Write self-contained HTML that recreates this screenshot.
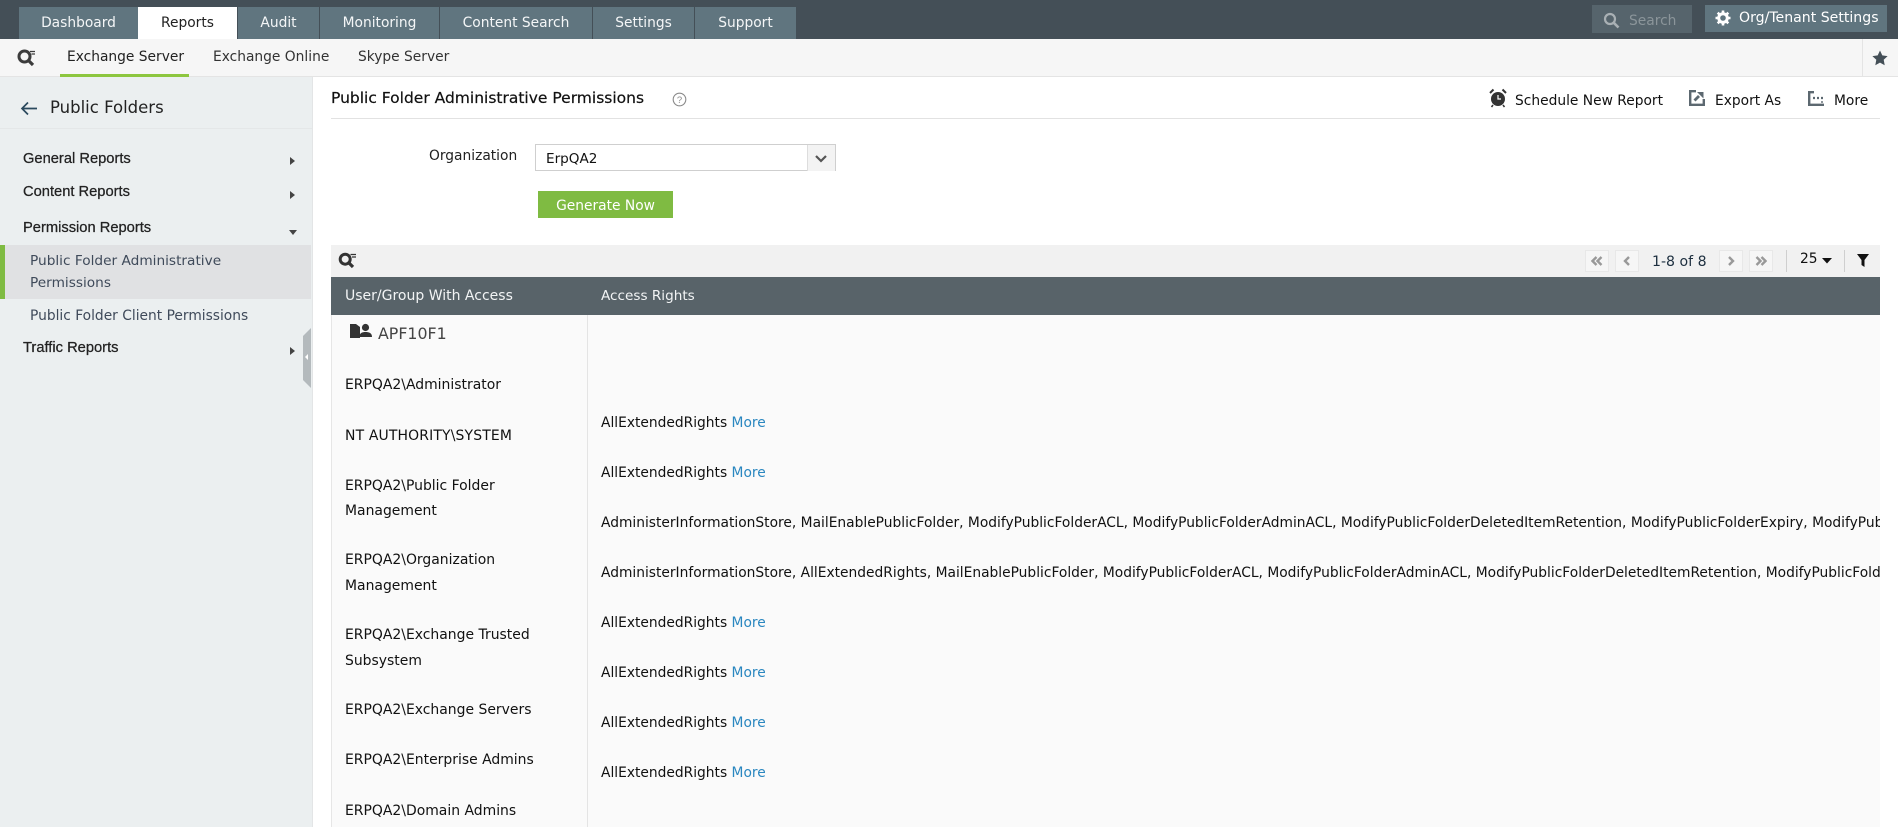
<!DOCTYPE html>
<html><head><meta charset="utf-8">
<style>
html,body{margin:0;padding:0;width:1898px;height:827px;overflow:hidden;background:#fff;font-family:"DejaVu Sans",sans-serif;color:#111}
div,span.a,svg{position:absolute}
.t{white-space:nowrap;font-size:13.8px;line-height:20px}
.tab{top:7px;height:32px;background:#60757f;color:#f4f6f7;font-size:13.8px;line-height:33px;text-align:center;white-space:nowrap}
.sh{font-family:"Liberation Sans",sans-serif;font-size:14.7px;font-weight:400;-webkit-text-stroke:.25px #222;color:#222;left:23px;line-height:20px;white-space:nowrap}
.pg{top:250px;width:22px;height:20px;border:1px solid #e8e8e8;background:#f6f6f6}
.m{color:#2a87c0}
.l{font-size:13.95px}
</style></head><body>
<div style="left:0;top:0;width:1898px;height:39px;background:#444f57"></div>
<div class="tab" style="left:19px;width:119px">Dashboard</div>
<div class="tab" style="left:138px;width:99px;background:#fff;color:#222">Reports</div>
<div class="tab" style="left:238px;width:81px">Audit</div>
<div class="tab" style="left:320px;width:119px">Monitoring</div>
<div class="tab" style="left:440px;width:152px">Content Search</div>
<div class="tab" style="left:593px;width:101px">Settings</div>
<div class="tab" style="left:695px;width:101px">Support</div>

<div style="left:1592px;top:5px;width:100px;height:28px;background:#56646c"></div>
<svg style="left:1603px;top:12px" width="17" height="17" viewBox="0 0 17 17"><circle cx="7" cy="7" r="5" fill="none" stroke="#a9b0b4" stroke-width="2.2"/><path d="M10.8 10.8L15.5 15.5" stroke="#a9b0b4" stroke-width="2.6"/></svg>
<div class="t" style="left:1629px;top:11px;color:#8b959a">Search</div>
<div style="left:1705px;top:5px;width:182px;height:27px;background:#60757f"></div>
<svg style="left:1715px;top:10px" width="16" height="16" viewBox="0 0 16 16"><circle cx="8" cy="8" r="4.3" fill="none" stroke="#fff" stroke-width="3"/><path d="M8 0.5V3M8 13V15.5M0.5 8H3M13 8H15.5M2.7 2.7L4.5 4.5M11.5 11.5L13.3 13.3M2.7 13.3L4.5 11.5M11.5 4.5L13.3 2.7" stroke="#fff" stroke-width="2.6"/></svg>
<div class="t" style="left:1739px;top:8px;color:#fff;font-size:14.1px">Org/Tenant Settings</div>

<div style="left:0;top:39px;width:1898px;height:37px;background:#f6f6f6"></div>
<div style="left:0;top:76px;width:1898px;height:1px;background:#e4e4e4"></div>
<div style="left:1862px;top:39px;width:1px;height:37px;background:#e4e4e4"></div>
<svg style="left:1872px;top:50px" width="16" height="16" viewBox="0 0 16 16"><path d="M8 0.5L10.3 5.4L15.6 6.1L11.7 9.8L12.7 15.2L8 12.6L3.3 15.2L4.3 9.8L0.4 6.1L5.7 5.4Z" fill="#444f57"/></svg>
<svg style="left:17px;top:49px" width="18" height="18" viewBox="0 0 18 18"><circle cx="7.5" cy="7.5" r="5.5" fill="none" stroke="#3c3c3c" stroke-width="3"/><path d="M11 11L16 16" stroke="#3c3c3c" stroke-width="3.2"/><path d="M13 2.5H18M14.5 5H18" stroke="#3c3c3c" stroke-width="1.2"/></svg>
<div class="t" style="left:67px;top:47px;color:#222">Exchange Server</div>
<div class="t" style="left:213px;top:47px;color:#333">Exchange Online</div>
<div class="t" style="left:358px;top:47px;color:#333">Skype Server</div>
<div style="left:60px;top:74px;width:129px;height:3px;background:#8dc63f"></div>

<div style="left:0;top:77px;width:312px;height:750px;background:#ebeff0"></div>
<div style="left:312px;top:77px;width:1px;height:750px;background:#e3e5e6"></div>
<div style="left:0;top:128px;width:312px;height:1px;background:#e4e7e8"></div>
<svg style="left:20px;top:101px" width="18" height="15" viewBox="0 0 18 15"><path d="M17 7.5H2M8 1.5L2 7.5L8 13.5" fill="none" stroke="#2b4a5e" stroke-width="1.7"/></svg>
<div style="left:50px;top:97px;font-family:'DejaVu Sans',sans-serif;font-size:16.5px;line-height:22px;color:#222;white-space:nowrap">Public Folders</div>
<div class="sh" style="top:149px">General Reports</div>
<div class="sh" style="top:182px">Content Reports</div>
<div class="sh" style="top:218px">Permission Reports</div>
<div class="sh" style="top:338px">Traffic Reports</div>
<svg style="left:290px;top:157px" width="6" height="8"><path d="M0 0L5 4L0 8Z" fill="#444"/></svg>
<svg style="left:290px;top:191px" width="6" height="8"><path d="M0 0L5 4L0 8Z" fill="#444"/></svg>
<svg style="left:289px;top:230px" width="8" height="5"><path d="M0 0H8L4 5Z" fill="#444"/></svg>
<svg style="left:290px;top:347px" width="6" height="8"><path d="M0 0L5 4L0 8Z" fill="#444"/></svg>
<div style="left:0;top:245px;width:311px;height:54px;background:#e0e1e3"></div>
<div style="left:0;top:245px;width:5px;height:54px;background:#7fbb42"></div>
<div class="t" style="left:30px;top:250px;color:#3f4a5a;line-height:22px;font-size:13.7px">Public Folder Administrative<br>Permissions</div>
<div class="t" style="left:30px;top:306px;color:#3f4a5a">Public Folder Client Permissions</div>
<svg style="left:303px;top:328px" width="8" height="60"><path d="M0 8L8 0V60L0 52Z" fill="#b4babd"/><path d="M5 26V32L2 29Z" fill="#fff"/></svg>

<div style="left:331px;top:87px;font-size:15.5px;line-height:22px;color:#111;white-space:nowrap;-webkit-text-stroke:.2px #111;font-family:'DejaVu Sans',sans-serif">Public Folder Administrative Permissions</div>
<svg style="left:672px;top:92px" width="15" height="15" viewBox="0 0 15 15"><circle cx="7.5" cy="7.5" r="6.3" fill="none" stroke="#8a8a8a" stroke-width="1.1"/><text x="7.5" y="11" font-size="9.5" text-anchor="middle" fill="#8a8a8a" font-family="Liberation Sans">?</text></svg>
<div style="left:331px;top:118px;width:1549px;height:1px;background:#e2e2e2"></div>
<svg style="left:1489px;top:88px" width="18" height="20" viewBox="0 0 18 20"><circle cx="9" cy="11" r="7" fill="#333"/><path d="M9 7V11H12" fill="none" stroke="#fff" stroke-width="1.2"/><path d="M1 5L4.5 1.5M17 5L13.5 1.5" stroke="#333" stroke-width="2"/><path d="M4 17L2.5 19M14 17L15.5 19" stroke="#333" stroke-width="1.5"/></svg>
<div class="t" style="left:1515px;top:91px;color:#111">Schedule New Report</div>
<svg style="left:1689px;top:90px" width="16" height="16" viewBox="0 0 16 16"><path d="M7 1.2H1.2V14.8H14.8V9" fill="none" stroke="#5c6870" stroke-width="2.4"/><path d="M5.5 10.5L10 6" stroke="#5c6870" stroke-width="2.8"/><path d="M8 2H14.5V8.5Z" fill="#5c6870"/></svg>
<div class="t" style="left:1715px;top:91px;color:#111">Export As</div>
<svg style="left:1808px;top:91px" width="16" height="15" viewBox="0 0 16 15"><path d="M6 1.2H1.2V13.8H16" fill="none" stroke="#5c6870" stroke-width="2.4"/><path d="M5 7H7M9 7H11M13 7H15" stroke="#5c6870" stroke-width="2.2"/><path d="M14 10V12" stroke="#5c6870" stroke-width="1.4"/></svg>
<div class="t" style="left:1834px;top:91px;color:#111">More</div>

<div class="t" style="left:429px;top:146px;color:#222">Organization</div>
<div style="left:535px;top:144px;width:299px;height:25px;border:1px solid #cfcfcf;background:#fff"></div>
<div style="left:807px;top:145px;width:27px;height:26px;background:#f3f3f3;border-left:1px solid #ddd"></div>
<svg style="left:815px;top:155px" width="12" height="8"><path d="M1 1L6 6L11 1" fill="none" stroke="#555" stroke-width="2.2"/></svg>
<div class="t" style="left:546px;top:149px;color:#111;font-size:13.6px">ErpQA2</div>
<div style="left:538px;top:191px;width:135px;height:27px;background:#7fbb42;color:#fff;font-size:13.8px;line-height:30px;text-align:center">Generate Now</div>

<div style="left:331px;top:245px;width:1549px;height:32px;background:#f1f1f1"></div>
<svg style="left:338px;top:252px" width="18" height="17" viewBox="0 0 18 17"><circle cx="7.2" cy="7.2" r="5" fill="none" stroke="#333" stroke-width="3"/><path d="M10.5 10.5L15 15" stroke="#333" stroke-width="3.2"/><path d="M12.5 2.5H18M14 5H18" stroke="#333" stroke-width="1.2"/></svg>
<div class="pg" style="left:1585px"></div>
<div class="pg" style="left:1615px"></div>
<div class="pg" style="left:1719px"></div>
<div class="pg" style="left:1749px"></div>
<svg style="left:1591px;top:256px" width="12" height="10"><path d="M5.5 1L1.5 5L5.5 9M10.5 1L6.5 5L10.5 9" fill="none" stroke="#999" stroke-width="2.4"/></svg>
<svg style="left:1623px;top:256px" width="8" height="10"><path d="M6 1L2 5L6 9" fill="none" stroke="#999" stroke-width="2.4"/></svg>
<div class="t" style="left:1652px;top:252px;color:#1d2f3f;font-size:14.1px">1-8 of 8</div>
<svg style="left:1727px;top:256px" width="8" height="10"><path d="M2 1L6 5L2 9" fill="none" stroke="#999" stroke-width="2.4"/></svg>
<svg style="left:1755px;top:256px" width="12" height="10"><path d="M1.5 1L5.5 5L1.5 9M6.5 1L10.5 5L6.5 9" fill="none" stroke="#999" stroke-width="2.4"/></svg>
<div style="left:1786px;top:250px;width:1px;height:22px;background:#cfcfcf"></div>
<div class="t" style="left:1800px;top:249px;color:#111">25</div>
<svg style="left:1822px;top:258px" width="10" height="6"><path d="M0 0H10L5 5.5Z" fill="#111"/></svg>
<div style="left:1844px;top:250px;width:1px;height:22px;background:#cfcfcf"></div>
<svg style="left:1857px;top:254px" width="12" height="13"><path d="M0 0H12L7.5 6V13L4.5 11V6Z" fill="#111"/></svg>

<div style="left:331px;top:277px;width:1549px;height:38px;background:#586369"></div>
<div class="t l" style="left:345px;top:286px;color:#f2f4f5;font-size:14px">User/Group With Access</div>
<div class="t" style="left:601px;top:286px;color:#f2f4f5;font-size:13.6px">Access Rights</div>

<div style="left:331px;top:315px;width:1549px;height:512px;background:#fafafa;border-left:1px solid #e6e6e6;box-sizing:border-box"></div>
<div style="left:587px;top:315px;width:1px;height:512px;background:#e4e4e4"></div>
<svg style="left:349px;top:323px" width="24" height="16" viewBox="0 0 24 16"><path d="M1 1H7L11 4V15H1Z" fill="#333"/><circle cx="16.5" cy="4.5" r="3.6" fill="#333"/><path d="M10.5 14C10.5 10 13 9 16.5 9S23 10 23 14Z" fill="#333"/></svg>
<div style="left:378px;top:323px;font-size:15.8px;line-height:22px;color:#444;white-space:nowrap">APF10F1</div>

<div class="t l" style="left:345px;top:375px">ERPQA2\Administrator</div>
<div class="t l" style="left:345px;top:426px;letter-spacing:.15px">NT AUTHORITY\SYSTEM</div>
<div class="t l" style="left:345px;top:476px">ERPQA2\Public Folder</div>
<div class="t l" style="left:345px;top:501px">Management</div>
<div class="t l" style="left:345px;top:550px">ERPQA2\Organization</div>
<div class="t l" style="left:345px;top:576px">Management</div>
<div class="t l" style="left:345px;top:625px">ERPQA2\Exchange Trusted</div>
<div class="t l" style="left:345px;top:651px">Subsystem</div>
<div class="t l" style="left:345px;top:700px">ERPQA2\Exchange Servers</div>
<div class="t l" style="left:345px;top:750px">ERPQA2\Enterprise Admins</div>
<div class="t l" style="left:345px;top:801px">ERPQA2\Domain Admins</div>

<div class="t" style="left:601px;top:413px">AllExtendedRights <span class="m">More</span></div>
<div class="t" style="left:601px;top:463px">AllExtendedRights <span class="m">More</span></div>
<div style="left:601px;top:513px;width:1279px;height:20px;overflow:hidden"><div class="t" style="left:0;top:0">AdministerInformationStore, MailEnablePublicFolder, ModifyPublicFolderACL, ModifyPublicFolderAdminACL, ModifyPublicFolderDeletedItemRetention, ModifyPublicFolderExpiry, ModifyPublicFolderQuotas</div></div>
<div style="left:601px;top:563px;width:1279px;height:20px;overflow:hidden"><div class="t" style="left:0;top:0">AdministerInformationStore, AllExtendedRights, MailEnablePublicFolder, ModifyPublicFolderACL, ModifyPublicFolderAdminACL, ModifyPublicFolderDeletedItemRetention, ModifyPublicFolderExpiry</div></div>
<div class="t" style="left:601px;top:613px">AllExtendedRights <span class="m">More</span></div>
<div class="t" style="left:601px;top:663px">AllExtendedRights <span class="m">More</span></div>
<div class="t" style="left:601px;top:713px">AllExtendedRights <span class="m">More</span></div>
<div class="t" style="left:601px;top:763px">AllExtendedRights <span class="m">More</span></div>
</body></html>
